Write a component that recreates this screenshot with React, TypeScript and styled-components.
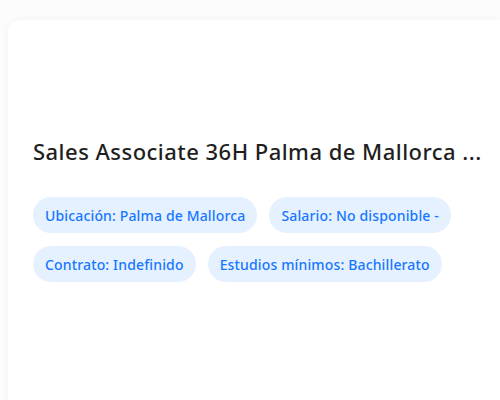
import React from 'react';
import styled, { createGlobalStyle } from 'styled-components';

const GlobalStyle = createGlobalStyle`
    html, body {
        margin: 0;
        padding: 0;
        background: #fcfcfc;
        font-family: "Noto Sans", "Open Sans", sans-serif;
    }
`

const Page = styled.div`
    padding: 20px 0 0 8px;
    height: 400px;
    box-sizing: border-box;
    overflow: hidden;
`

const Card = styled.div`
    background: #ffffff;
    border-radius: 12px 0 0 0;
    box-shadow: 0 0 10px rgba(0, 0, 0, 0.04);
    padding: 114px 0 0 25px;
    height: 420px;
    box-sizing: border-box;
`

const Title = styled.h2`
    margin: 0 0 29px 0;
    font-size: 22px;
    line-height: 34px;
    font-weight: 500;
    letter-spacing: 0.47px;
    color: #1f1f1f;
    white-space: nowrap;
`

const Tags = styled.div`
    display: flex;
    flex-wrap: wrap;
    gap: 13px 12px;
    max-width: 440px;
`

const Tag = styled.span`
    display: inline-flex;
    align-items: center;
    height: 36px;
    padding: 0 12px;
    border-radius: 18px;
    background: #e6f1ff;
    color: #1677ff;
    font-size: 14px;
    font-weight: 500;
    letter-spacing: 0.15px;
    white-space: nowrap;
`

const tags = [
    'Ubicación: Palma de Mallorca',
    'Salario: No disponible -',
    'Contrato: Indefinido',
    'Estudios mínimos: Bachillerato',
]

const App: React.FC = () => {
    return <>
        <GlobalStyle />
        <Page>
            <Card>
                <Title>Sales Associate 36H Palma de Mallorca ...</Title>
                <Tags>
                    {tags.map(t => <Tag key={t}>{t}</Tag>)}
                </Tags>
            </Card>
        </Page>
    </>
}

export default App;
